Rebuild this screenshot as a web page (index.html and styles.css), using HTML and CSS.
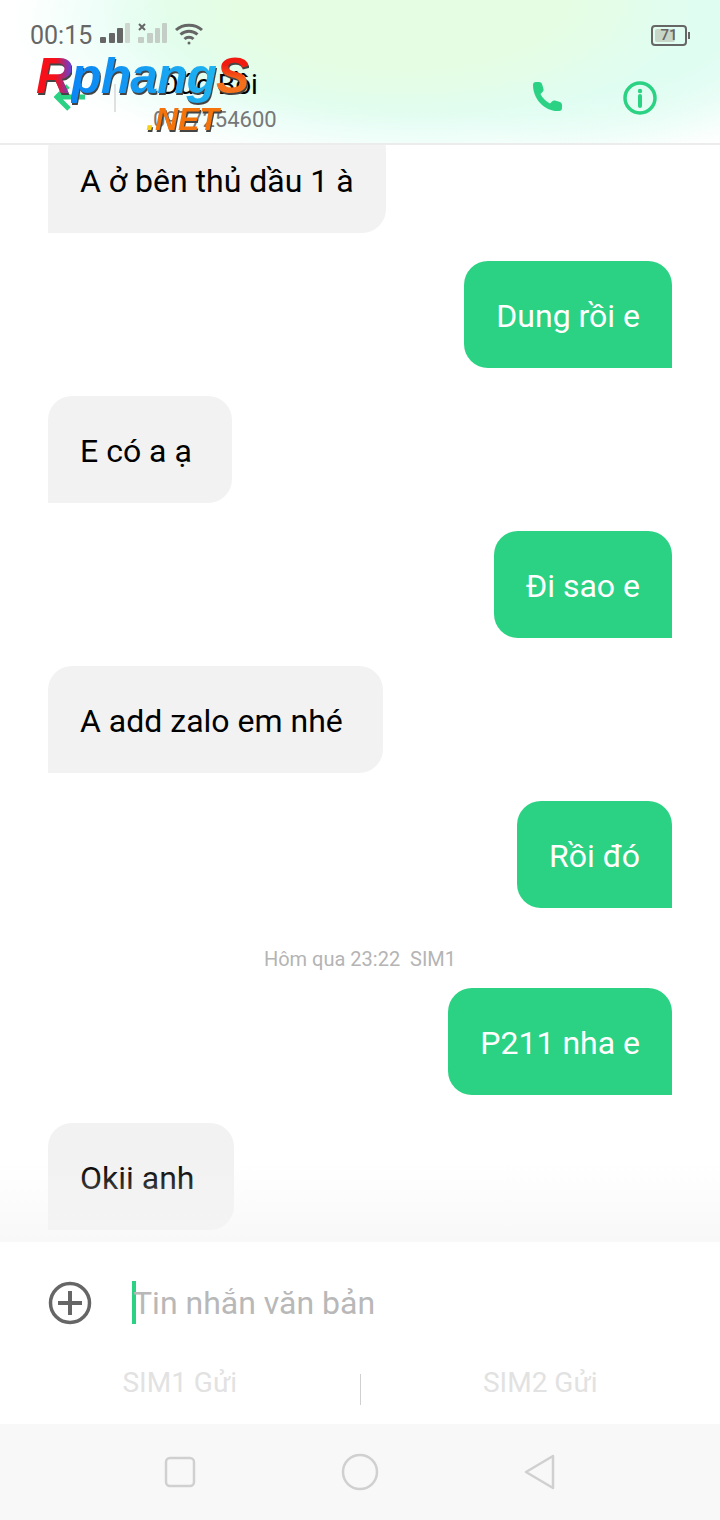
FILE: index.html
```html
<!DOCTYPE html>
<html lang="vi">
<head>
<meta charset="utf-8">
<title>Tin nhắn</title>
<link rel="stylesheet" href="styles.css">
</head>
<body>
<div class="phone">

<header class="top">
	<div class="status">
		<span class="time">00:15</span>
		<svg class="signal" width="31" height="22" viewBox="0 0 31 22">
			<rect x="0" y="14" width="6" height="6" rx="1" fill="#666"/>
			<rect x="9" y="10" width="6" height="10" rx="1" fill="#666"/>
			<rect x="17" y="5" width="6" height="15" rx="1" fill="#666"/>
			<rect x="25" y="0" width="5" height="20" rx="1" fill="#cfd5cf"/>
		</svg>
		<svg class="signal" width="31" height="22" viewBox="0 0 31 22">
			<path d="M1 1l6 6M7 1l-6 6" stroke="#666" stroke-width="2"/>
			<rect x="0" y="14" width="6" height="6" rx="1" fill="#c5cdc7"/>
			<rect x="9" y="10" width="6" height="10" rx="1" fill="#c5cdc7"/>
			<rect x="17" y="5" width="5" height="15" rx="1" fill="#c5cdc7"/>
			<rect x="24" y="0" width="5" height="20" rx="1" fill="#c5cdc7"/>
		</svg>
		<svg class="wifi" width="30" height="24" viewBox="0 0 30 24" fill="none" stroke="#666" stroke-width="3">
			<path d="M2 8c7-6.500 19-6.500 26 0"/>
			<path d="M6.500 12.500c5-4.500 12-4.500 17 0"/>
			<path d="M10.500 17c2.500-2.300 6.500-2.300 9 0"/>
			<circle cx="15" cy="21" r="1.500" fill="#666" stroke="none"/>
		</svg>
		<div class="battery"><div class="batteryLevel"></div><span>71</span></div>
	</div>
	<div class="contact">
		<svg class="backArrow" width="32" height="28" viewBox="0 0 32 28" fill="none" stroke="#2bd283" stroke-width="5">
			<path d="M14 2L3 13l12 12M3 13h28"/>
		</svg>
		<div class="sep"></div>
		<div class="who">
			<div class="name">Đức Bồi</div>
			<div class="number">0977254600</div>
		</div>
		<svg class="call" width="36" height="36" viewBox="0 0 36 36">
			<path d="M3 6c0-2 1-3 3-3h3c1.500 0 2.500.8 3 2l1.500 5c.3 1.200 0 2-1 3l-2 2c2 4 5.500 7.500 9.500 9.500l2-2c1-1 2-1.300 3-1l5 1.500c1.200.5 2 1.500 2 3v3c0 2-1 3-3 3C15.500 33 3 20.500 3 6z" fill="#2bd283"/>
		</svg>
		<svg class="info" width="34" height="34" viewBox="0 0 34 34" fill="none" stroke="#2bd283">
			<circle cx="17" cy="17" r="15" stroke-width="3.500"/>
			<path d="M17 15v10" stroke-width="4" stroke-linecap="round"/>
			<circle cx="17" cy="10" r="2.200" fill="#2bd283" stroke="none"/>
		</svg>
	</div>
	<div class="logo">
		<div class="logoMain"><span class="logoR">R</span><span class="logoMid">phang</span><span class="logoS">S</span></div>
		<div class="logoNet"><span class="logoDot">.</span>NET</div>
	</div>
</header>

<main class="chat">
	<div class="msg in">A ở bên thủ dầu 1 à</div>
	<div class="msg out">Dung rồi e</div>
	<div class="msg in">E có a ạ&nbsp;</div>
	<div class="msg out">Đi sao e</div>
	<div class="msg in">A add zalo em nhé&nbsp;</div>
	<div class="msg out">Rồi đó</div>
	<div class="stamp">Hôm qua 23:22&nbsp; SIM1</div>
	<div class="msg out">P211 nha e</div>
	<div class="msg in">Okii anh&nbsp;</div>
	<div class="fade"></div>
</main>

<section class="composer">
	<div class="inputRow">
		<svg class="plus" width="44" height="44" viewBox="0 0 44 44" fill="none" stroke="#666">
			<circle cx="22" cy="22" r="19.500" stroke-width="3.500"/>
			<path d="M10 22h24M22 10v24" stroke-width="4"/>
		</svg>
		<div class="caret"></div>
		<div class="hint">Tin nhắn văn bản</div>
	</div>
	<div class="sendRow">
		<div class="sendBtn">SIM1 Gửi</div>
		<div class="sendSep"></div>
		<div class="sendBtn">SIM2 Gửi</div>
	</div>
</section>

<nav class="nav">
	<svg width="32" height="32" viewBox="0 0 32 32" fill="none" stroke="#d0d0d0" stroke-width="2.500">
		<rect x="2" y="2" width="28" height="28" rx="4"/>
	</svg>
	<svg width="38" height="38" viewBox="0 0 38 38" fill="none" stroke="#d0d0d0" stroke-width="2.500">
		<circle cx="19" cy="19" r="17"/>
	</svg>
	<svg width="32" height="36" viewBox="0 0 32 36" fill="none" stroke="#d0d0d0" stroke-width="2.500" stroke-linejoin="round">
		<path d="M2 18L29 2v32z"/>
	</svg>
</nav>

</div>
</body>
</html>
```

FILE: styles.css
```css
html, body {
	margin: 0;
	padding: 0;
	background-color: white;
}
body {
	font-family: Roboto, "Liberation Sans", sans-serif;
}
.phone {
	position: relative;
	width: 720px;
	height: 1520px;
	display: flex;
	flex-direction: column;
	overflow: hidden;
}

/* header */
.top {
	position: relative;
	flex: none;
	height: 143px;
	border-bottom: 2px solid #ececec;
	background:
		radial-gradient(ellipse 300px 125px at 400px 0, #e5fde3 55%, rgba(229,253,227,0) 100%),
		radial-gradient(ellipse 240px 150px at 620px 10px, #e0fdf2 45%, rgba(224,253,242,0) 100%),
		radial-gradient(ellipse 420px 150px at 430px 20px, #e0fdf2 60%, rgba(224,253,242,0) 100%),
		white;
	z-index: 1;
}
.status {
	display: flex;
	align-items: center;
	height: 28px;
	padding: 21px 33px 0 30px;
	color: #666;
}
.time {
	font-size: 25px;
	margin-right: 8px;
}
.signal {
	margin-right: 7px;
	margin-top: -2px;
}
.wifi {
	margin-top: -3px;
	margin-left: -2px;
}
.battery {
	position: relative;
	margin-left: auto;
	width: 32px;
	height: 17px;
	border: 2px solid #666;
	border-radius: 4px;
	font-size: 15px;
	font-weight: 500;
	line-height: 17px;
	text-align: center;
}
.battery::after {
	content: "";
	position: absolute;
	right: -5px;
	top: 5px;
	width: 2px;
	height: 7px;
	background-color: #666;
}
.batteryLevel {
	position: absolute;
	left: 2px;
	top: 2px;
	bottom: 2px;
	width: 20px;
	border-radius: 2px;
	background-color: #c8d6c8;
}
.battery span {
	position: relative;
}
.contact {
	display: flex;
	align-items: center;
	height: 94px;
}
.backArrow {
	margin: 4px 0 0 54px;
	flex: none;
}
.sep {
	width: 2px;
	height: 28px;
	margin: 4px 0 0 28px;
	background-color: #e0e0e0;
}
.who {
	margin: 12px 0 0 44px;
	width: 330px;
}
.name {
	font-size: 28px;
	line-height: 36px;
	color: black;
}
.number {
	margin-left: -7px;
	font-size: 22px;
	line-height: 34px;
	color: #777;
}
.call {
	flex: none;
	margin: 2px 0 0 40px;
}
.info {
	flex: none;
	margin: 3px 0 0 57px;
}

/* watermark sitting over the header */
.logo {
	position: absolute;
	left: 36px;
	top: 51px;
	width: 230px;
	font-family: "Liberation Sans", sans-serif;
	font-weight: bold;
	font-style: italic;
	filter: drop-shadow(1px 2px 0 #444);
}
.logoMain {
	font-size: 50px;
	line-height: 50px;
	white-space: nowrap;
	letter-spacing: -1px;
}
.logoR {
	color: transparent;
	background: linear-gradient(90deg, #f5101a 55%, #6a3fd0 100%);
	-webkit-background-clip: text;
	background-clip: text;
}
.logoMid {
	color: transparent;
	background: linear-gradient(90deg, #0a86f5, #1fb4f0);
	-webkit-background-clip: text;
	background-clip: text;
}
.logoS {
	color: transparent;
	background: linear-gradient(#f01a10 30%, #f4701a 60%);
	-webkit-background-clip: text;
	background-clip: text;
}
.logoNet {
	margin: 1px 0 0 110px;
	font-size: 32px;
	line-height: 34px;
	color: #f4730a;
}
.logoDot {
	color: #f7d01a;
}

/* messages */
.chat {
	position: relative;
	flex: 1;
	min-height: 0;
	display: flex;
	flex-direction: column;
	justify-content: flex-end;
	gap: 28px;
	padding: 0 48px 12px 48px;
	overflow: hidden;
}
.msg {
	flex: none;
	box-sizing: border-box;
	height: 107px;
	padding: 0 32px;
	border-radius: 24px;
	font-size: 32px;
	line-height: 111px;
	white-space: nowrap;
}
.in {
	align-self: flex-start;
	background-color: #f2f2f2;
	color: black;
	border-bottom-left-radius: 0;
}
.out {
	align-self: flex-end;
	background-color: #2bd283;
	color: white;
	border-bottom-right-radius: 0;
}
.stamp {
	flex: none;
	align-self: center;
	height: 24px;
	margin: 11px 0 -11px 0;
	font-size: 20px;
	line-height: 24px;
	color: #b4b4b4;
}
.fade {
	position: absolute;
	left: 0;
	right: 0;
	bottom: 0;
	height: 80px;
	background: linear-gradient(rgba(245,245,245,0), rgba(245,245,245,0.7));
}

/* composer */
.composer {
	flex: none;
	height: 182px;
	background-color: white;
}
.inputRow {
	display: flex;
	align-items: center;
	height: 121px;
	padding-left: 48px;
}
.caret {
	width: 4px;
	height: 43px;
	margin-left: 40px;
	background-color: #2bd283;
}
.hint {
	margin-left: -3px;
	font-size: 32px;
	color: #b8b8b8;
}
.sendRow {
	display: flex;
	align-items: flex-start;
	height: 61px;
}
.sendBtn {
	flex: 1;
	text-align: center;
	font-size: 28px;
	line-height: 40px;
	color: #e2e2e2;
}
.sendSep {
	width: 1px;
	height: 31px;
	margin-top: 11px;
	background-color: #d0d0d0;
}

/* android buttons */
.nav {
	flex: none;
	height: 96px;
	display: grid;
	grid-template-columns: 180px 180px 180px;
	justify-content: center;
	justify-items: center;
	align-items: center;
	background-color: #f8f8f8;
}
```
